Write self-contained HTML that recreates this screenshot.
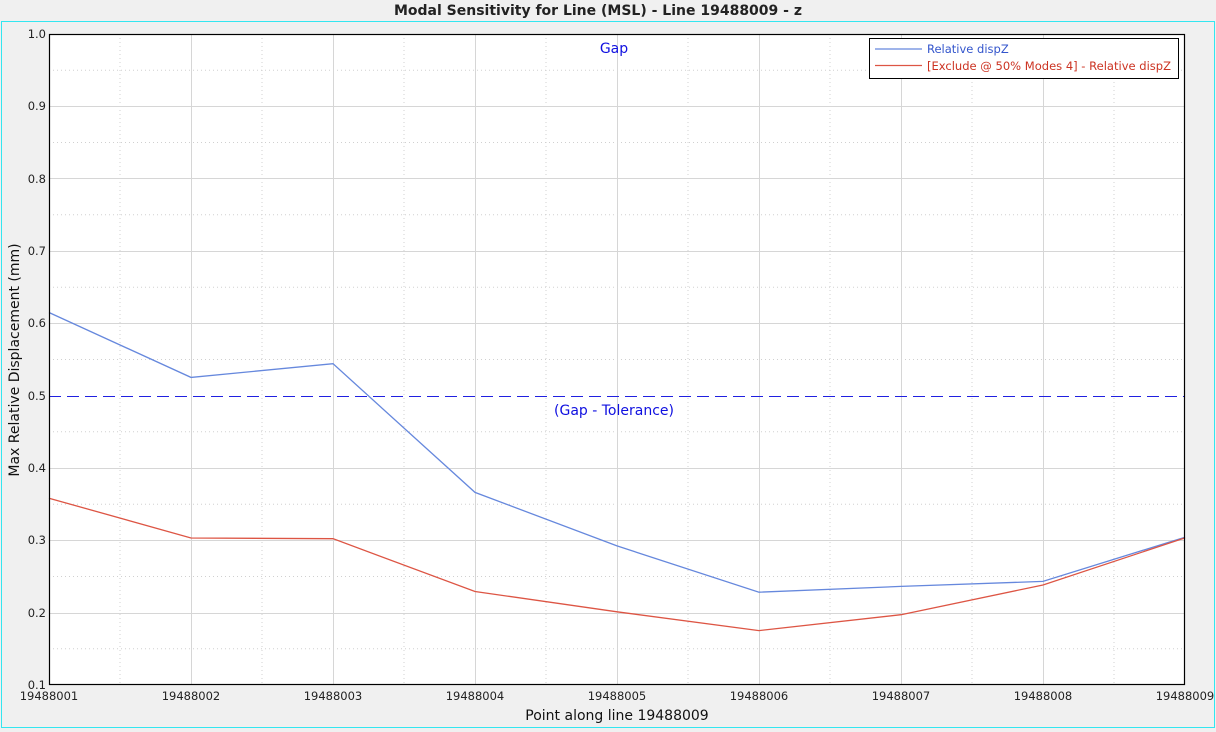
<!DOCTYPE html>
<html><head><meta charset="utf-8"><style>
body{margin:0;background:#f0f0f0;width:1216px;height:728px;overflow:hidden;font-family:"DejaVu Sans","Liberation Sans",sans-serif}
</style></head><body>
<svg width="1216" height="728" xmlns="http://www.w3.org/2000/svg" font-family="DejaVu Sans, Liberation Sans, sans-serif">
<rect width="1216" height="728" fill="#f0f0f0"/>
<text x="598" y="15" text-anchor="middle" font-size="14" font-weight="bold" fill="#222">Modal Sensitivity for Line (MSL) - Line 19488009 - z</text>
<rect x="1.5" y="21.5" width="1213" height="706" fill="none" stroke="#33e6f0" stroke-width="1"/>
<rect x="49" y="34" width="1136" height="651" fill="#fff"/>
<g stroke="#d0d0d0" stroke-width="1" stroke-dasharray="1,3">
<line x1="120" y1="34" x2="120" y2="685"/><line x1="262" y1="34" x2="262" y2="685"/><line x1="404" y1="34" x2="404" y2="685"/><line x1="546" y1="34" x2="546" y2="685"/><line x1="688" y1="34" x2="688" y2="685"/><line x1="830" y1="34" x2="830" y2="685"/><line x1="972" y1="34" x2="972" y2="685"/><line x1="1114" y1="34" x2="1114" y2="685"/>
<line x1="49" y1="70.2" x2="1185" y2="70.2"/><line x1="49" y1="142.5" x2="1185" y2="142.5"/><line x1="49" y1="214.8" x2="1185" y2="214.8"/><line x1="49" y1="287.2" x2="1185" y2="287.2"/><line x1="49" y1="359.5" x2="1185" y2="359.5"/><line x1="49" y1="431.8" x2="1185" y2="431.8"/><line x1="49" y1="504.2" x2="1185" y2="504.2"/><line x1="49" y1="576.5" x2="1185" y2="576.5"/><line x1="49" y1="648.8" x2="1185" y2="648.8"/>
</g>
<g stroke="#d6d6d6" stroke-width="1">
<line x1="191.5" y1="34" x2="191.5" y2="685"/><line x1="333.5" y1="34" x2="333.5" y2="685"/><line x1="475.5" y1="34" x2="475.5" y2="685"/><line x1="617.5" y1="34" x2="617.5" y2="685"/><line x1="759.5" y1="34" x2="759.5" y2="685"/><line x1="901.5" y1="34" x2="901.5" y2="685"/><line x1="1043.5" y1="34" x2="1043.5" y2="685"/>
<line x1="49" y1="106.5" x2="1185" y2="106.5"/><line x1="49" y1="178.5" x2="1185" y2="178.5"/><line x1="49" y1="251.5" x2="1185" y2="251.5"/><line x1="49" y1="323.5" x2="1185" y2="323.5"/><line x1="49" y1="468.5" x2="1185" y2="468.5"/><line x1="49" y1="540.5" x2="1185" y2="540.5"/><line x1="49" y1="613.5" x2="1185" y2="613.5"/>
</g>
<line x1="49" y1="396.5" x2="1185" y2="396.5" stroke="#2020e0" stroke-width="1" stroke-dasharray="12,6"/>
<text x="614" y="53" text-anchor="middle" font-size="14" fill="#1010e0">Gap</text>
<text x="614" y="415" text-anchor="middle" font-size="14" fill="#1010e0">(Gap - Tolerance)</text>
<polyline fill="none" stroke="#6688dd" stroke-width="1.3" points="49,312.5 191,377.4 333,363.7 475,492.4 617,545.9 759,592.2 901,586.4 1043,581.4 1185,537.2"/>
<polyline fill="none" stroke="#dd5544" stroke-width="1.3" points="49,498.2 191,538.0 333,538.7 475,591.5 617,611.8 759,630.6 901,614.7 1043,585.0 1185,537.9"/>
<rect x="49.5" y="34.5" width="1135" height="650" fill="none" stroke="#000" stroke-width="1.2"/>
<rect x="869.5" y="38.5" width="309" height="40" fill="#fff" stroke="#000" stroke-width="1"/>
<line x1="875" y1="49" x2="922" y2="49" stroke="#6688dd" stroke-width="1.3"/>
<line x1="875" y1="65.5" x2="922" y2="65.5" stroke="#dd5544" stroke-width="1.3"/>
<text x="927" y="53" font-size="11.5" fill="#3355cc">Relative dispZ</text>
<text x="927" y="70" font-size="11.5" fill="#cc3322" textLength="244" lengthAdjust="spacingAndGlyphs">[Exclude @ 50% Modes 4] - Relative dispZ</text>
<g font-size="11.5" fill="#222" text-anchor="end">
<text x="46" y="38">1.0</text><text x="46" y="110">0.9</text><text x="46" y="183">0.8</text><text x="46" y="255">0.7</text><text x="46" y="327">0.6</text><text x="46" y="400">0.5</text><text x="46" y="472">0.4</text><text x="46" y="544">0.3</text><text x="46" y="617">0.2</text><text x="46" y="689">0.1</text>
</g>
<g font-size="11.5" fill="#222" text-anchor="middle">
<text x="49" y="700">19488001</text><text x="191" y="700">19488002</text><text x="333" y="700">19488003</text><text x="475" y="700">19488004</text><text x="617" y="700">19488005</text><text x="759" y="700">19488006</text><text x="901" y="700">19488007</text><text x="1043" y="700">19488008</text><text x="1185" y="700">19488009</text>
</g>
<text x="617" y="720" text-anchor="middle" font-size="14" fill="#111">Point along line 19488009</text>
<text transform="translate(19,360) rotate(-90)" text-anchor="middle" font-size="14" fill="#111">Max Relative Displacement (mm)</text>
</svg>
</body></html>
